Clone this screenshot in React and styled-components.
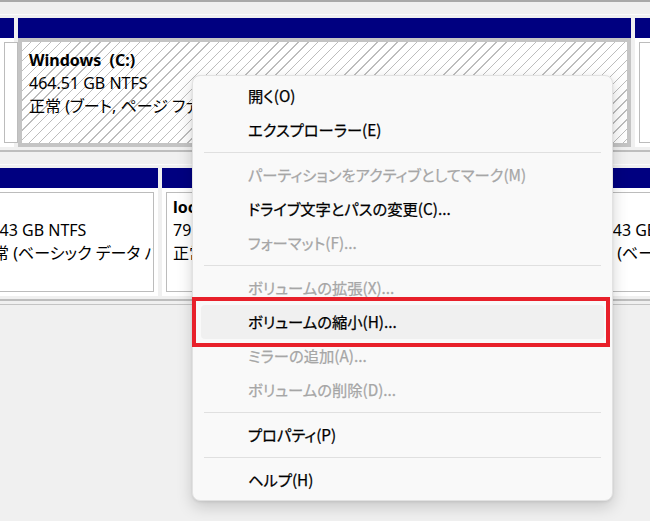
import styled, { createGlobalStyle, css } from 'styled-components';

const GlobalStyle = createGlobalStyle`
  html, body {
    margin: 0;
    padding: 0;
    background: #f0f0f0;
  }
  body {
    font-family: "Noto Sans", "Noto Sans CJK JP", sans-serif;
  }
`;

const Screen = styled.div`
  position: relative;
  width: 650px;
  height: 521px;
  overflow: hidden;
  box-sizing: border-box;
  background: #f0f0f0;
  border-top: 2px solid #a9a9a9;
`;

const DiskRow = styled.div`
  display: flex;
  gap: 4px;
  margin-top: 12px;
  margin-left: ${(p) => p.$shift || 0}px;
  padding: 3px 0;
  border-top: 1px solid #fbfbfb;
  border-bottom: 2px solid #bdbdbd;
`;

const BottomLine = styled.div`
  margin-top: 3px;
  height: 1px;
  background: #c4c4c4;
`;

const Partition = styled.div`
  flex: 0 0 ${(p) => p.$width}px;
  min-width: 0;
  display: flex;
  flex-direction: column;
`;

const PartHeader = styled.div`
  height: 20px;
  background: #000080;
`;

const PartBody = styled.div`
  height: ${(p) => p.$height}px;
  box-sizing: border-box;
  display: flex;
  padding: 4px;
  background: ${(p) => (p.$selected ? '#c4c4c4' : '#ffffff')};
`;

const Frame = styled.div`
  flex: 1;
  min-width: 0;
  overflow: hidden;
  box-sizing: border-box;
  ${(p) =>
    p.$selected
      ? css`
          padding: 7px 7px;
          background: repeating-linear-gradient(
            135deg,
            #ffffff 0 6px,
            #bdbdbd 6px 7px
          );
        `
      : css`
          padding: 3px 6px;
          border: 1px solid #bcbcbc;
          background: #ffffff;
        `}
`;

const PartLine = styled.div`
  font-family: "Noto Sans", "Noto Sans CJK JP", sans-serif;
  font-size: 16px;
  line-height: 23px;
  white-space: pre;
  font-feature-settings: "palt";
  color: #000;
  font-weight: ${(p) => (p.$bold ? 700 : 400)};
`;

const Menu = styled.div`
  position: absolute;
  left: 192px;
  top: 73px;
  width: 421px;
  box-sizing: border-box;
  padding: 3px 0;
  background: #f9f9f9;
  border: 1px solid #e2e2e2;
  border-radius: 8px;
  box-shadow: 0 6px 16px rgba(0, 0, 0, 0.17), 0 1px 3px rgba(0, 0, 0, 0.08);
  font-family: "Noto Sans CJK JP", "Noto Sans", sans-serif;
`;

const MenuItem = styled.div`
  height: 34px;
  box-sizing: border-box;
  display: flex;
  align-items: center;
  margin: 0 8px;
  padding: 0 0 3px 47px;
  border-radius: 4px;
  font-size: 15.3px;
  font-feature-settings: "palt";
  -webkit-text-stroke: 0.25px currentColor;
  white-space: nowrap;
  color: ${(p) => (p.$disabled ? '#a6a6a6' : '#000000')};
  background: ${(p) => (p.$active ? '#f0f0f0' : 'transparent')};
`;

const MenuSeparator = styled.div`
  height: 1px;
  margin: 5px 11px;
  background: #e0e0e0;
`;

const Callout = styled.div`
  position: absolute;
  left: 192px;
  top: 295px;
  width: 418px;
  height: 50px;
  box-sizing: border-box;
  border: 4px solid #e8202a;
  pointer-events: none;
`;

const topRow = [
  { width: 14, lines: [] },
  {
    width: 613,
    selected: true,
    lines: [
      { text: 'Windows  (C:)', bold: true },
      { text: '464.51 GB NTFS' },
      { text: '正常 (ブート, ページ ファイル, クラッシュ ダンプ, ベーシック データ)' },
    ],
  },
  { width: 40, lines: [] },
];

const bottomRow = [
  {
    width: 192,
    lines: [
      { text: 'D:', bold: true },
      { text: '12.43 GB NTFS' },
      { text: '正常 (ベーシック データ パーティション)' },
    ],
  },
  {
    width: 404,
    lines: [
      { text: 'local (E:)', bold: true },
      { text: '79.99 GB NTFS' },
      { text: '正常 (ベーシック データ パーティション)' },
    ],
  },
  {
    width: 120,
    lines: [
      { text: 'OS', bold: true },
      { text: '100.43 GB NTFS' },
      { text: '正常 (ベーシック データ パーティション)' },
    ],
  },
];

const menu = [
  { label: '開く(O)' },
  { label: 'エクスプローラー(E)' },
  { sep: true },
  { label: 'パーティションをアクティブとしてマーク(M)', disabled: true },
  { label: 'ドライブ文字とパスの変更(C)...' },
  { label: 'フォーマット(F)...', disabled: true },
  { sep: true },
  { label: 'ボリュームの拡張(X)...', disabled: true },
  { label: 'ボリュームの縮小(H)...', active: true },
  { label: 'ミラーの追加(A)...', disabled: true },
  { label: 'ボリュームの削除(D)...', disabled: true },
  { sep: true },
  { label: 'プロパティ(P)' },
  { sep: true },
  { label: 'ヘルプ(H)' },
];

const Row = ({ parts, height, shift }) => (
  <DiskRow $shift={shift}>
    {parts.map((p, i) => (
      <Partition key={i} $width={p.width}>
        <PartHeader />
        <PartBody $height={height} $selected={p.selected}>
          <Frame $selected={p.selected}>
            {p.lines.map((l, j) => (
              <PartLine key={j} $bold={l.bold}>
                {l.text}
              </PartLine>
            ))}
          </Frame>
        </PartBody>
      </Partition>
    ))}
  </DiskRow>
);

export default function App() {
  return (
    <>
      <GlobalStyle />
      <Screen>
        <Row parts={topRow} height={109} />
        <Row parts={bottomRow} height={108} shift={-34} />
        <BottomLine />
        <Menu>
          {menu.map((m, i) =>
            m.sep ? (
              <MenuSeparator key={i} />
            ) : (
              <MenuItem key={i} $disabled={m.disabled} $active={m.active}>
                {m.label}
              </MenuItem>
            )
          )}
        </Menu>
        <Callout />
      </Screen>
    </>
  );
}
